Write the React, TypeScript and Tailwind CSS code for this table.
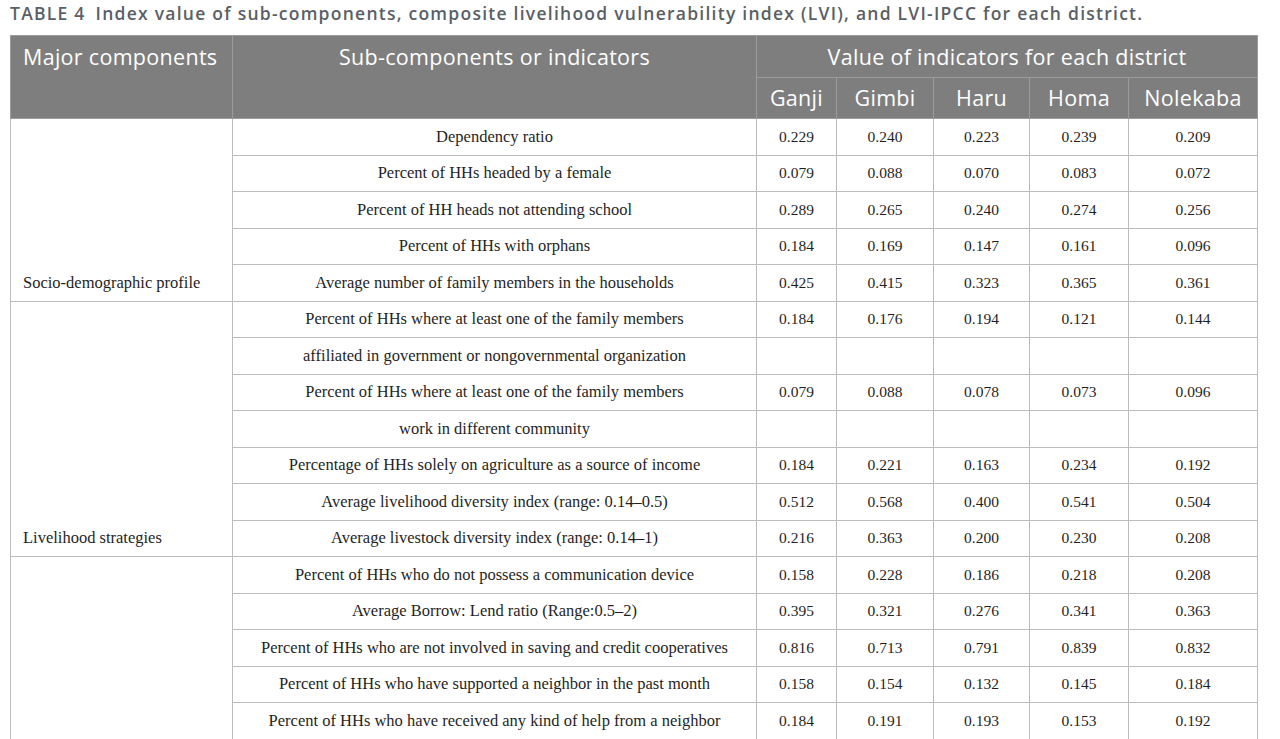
import React from 'react';

type Row = { label: string; values?: string[] };

type Group = { name: string; rows: Row[] };

const districts = ['Ganji', 'Gimbi', 'Haru', 'Homa', 'Nolekaba'];

const groups: Group[] = [
  {
    name: 'Socio-demographic profile',
    rows: [
      { label: 'Dependency ratio', values: ['0.229', '0.240', '0.223', '0.239', '0.209'] },
      { label: 'Percent of HHs headed by a female', values: ['0.079', '0.088', '0.070', '0.083', '0.072'] },
      { label: 'Percent of HH heads not attending school', values: ['0.289', '0.265', '0.240', '0.274', '0.256'] },
      { label: 'Percent of HHs with orphans', values: ['0.184', '0.169', '0.147', '0.161', '0.096'] },
      { label: 'Average number of family members in the households', values: ['0.425', '0.415', '0.323', '0.365', '0.361'] },
    ],
  },
  {
    name: 'Livelihood strategies',
    rows: [
      { label: 'Percent of HHs where at least one of the family members', values: ['0.184', '0.176', '0.194', '0.121', '0.144'] },
      { label: 'affiliated in government or nongovernmental organization' },
      { label: 'Percent of HHs where at least one of the family members', values: ['0.079', '0.088', '0.078', '0.073', '0.096'] },
      { label: 'work in different community' },
      { label: 'Percentage of HHs solely on agriculture as a source of income', values: ['0.184', '0.221', '0.163', '0.234', '0.192'] },
      { label: 'Average livelihood diversity index (range: 0.14–0.5)', values: ['0.512', '0.568', '0.400', '0.541', '0.504'] },
      { label: 'Average livestock diversity index (range: 0.14–1)', values: ['0.216', '0.363', '0.200', '0.230', '0.208'] },
    ],
  },
  {
    name: '',
    rows: [
      { label: 'Percent of HHs who do not possess a communication device', values: ['0.158', '0.228', '0.186', '0.218', '0.208'] },
      { label: 'Average Borrow: Lend ratio (Range:0.5–2)', values: ['0.395', '0.321', '0.276', '0.341', '0.363'] },
      { label: 'Percent of HHs who are not involved in saving and credit cooperatives', values: ['0.816', '0.713', '0.791', '0.839', '0.832'] },
      { label: 'Percent of HHs who have supported a neighbor in the past month', values: ['0.158', '0.154', '0.132', '0.145', '0.184'] },
      { label: 'Percent of HHs who have received any kind of help from a neighbor', values: ['0.184', '0.191', '0.193', '0.153', '0.192'] },
    ],
  },
];

const App = () => {
  return (
    <div className="bg-white w-[1280px] h-[739px] overflow-hidden font-['Open_Sans',sans-serif]">
      <p className="pl-[10px] pt-[2px] h-[35px] text-[17.5px] leading-[22px] text-[#5a5f66] font-semibold tracking-[1.25px] whitespace-nowrap">
        <span>TABLE 4</span>
        <span className="ml-[10px]">Index value of sub-components, composite livelihood vulnerability index (LVI), and LVI-IPCC for each district.</span>
      </p>

      <table className="ml-[10px] w-[1247px] border-collapse table-fixed">
        <colgroup>
          <col className="w-[222px]" />
          <col className="w-[524px]" />
          <col className="w-[80px]" />
          <col className="w-[97px]" />
          <col className="w-[96px]" />
          <col className="w-[99px]" />
          <col className="w-[129px]" />
        </colgroup>
        <thead className="bg-[#7e7e7e] text-white text-[21.5px] tracking-[0.3px]">
          <tr className="h-[42px]">
            <th rowSpan={2} className="border border-[#9c9c9c] align-top text-left font-normal pl-[12px] pt-[6px] leading-[30px]">
              Major components
            </th>
            <th rowSpan={2} className="border border-[#9c9c9c] align-top text-center font-normal pt-[6px] leading-[30px]">
              Sub-components or indicators
            </th>
            <th colSpan={5} className="border border-[#9c9c9c] text-center font-normal leading-[30px]">
              Value of indicators for each district
            </th>
          </tr>
          <tr className="h-[41px]">
            {districts.map((d) => (
              <th key={d} className="border border-[#9c9c9c] text-center font-normal leading-[30px]">
                {d}
              </th>
            ))}
          </tr>
        </thead>
        <tbody className="font-['Liberation_Serif',serif] text-[16.5px] text-[#1f1f1f]">
          {groups.map((g) =>
            g.rows.map((r, i) => (
              <tr key={g.name + i} className="h-[36.5px]">
                {i === 0 && (
                  <td rowSpan={g.rows.length} className="border border-[#bcbcbc] align-bottom text-left pl-[12px] pb-[8px] leading-[20px]">
                    {g.name}
                  </td>
                )}
                <td className="border border-[#bcbcbc] text-center leading-[20px] whitespace-nowrap">{r.label}</td>
                {districts.map((d, j) => (
                  <td key={d} className="border border-[#bcbcbc] text-center leading-[20px] text-[15.5px]">
                    {r.values ? r.values[j] : ''}
                  </td>
                ))}
              </tr>
            ))
          )}
        </tbody>
      </table>
    </div>
  );
};

export default App;
